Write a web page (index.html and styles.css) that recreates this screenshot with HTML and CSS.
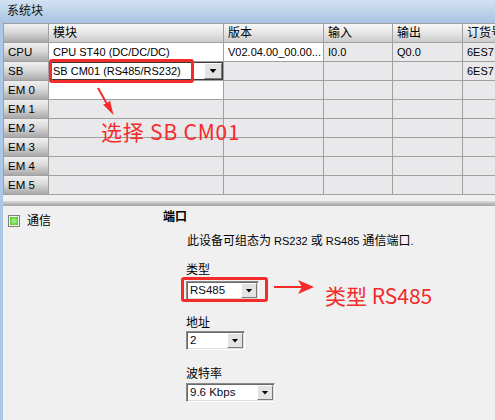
FILE: index.html
```html
<!DOCTYPE html>
<html>
<head>
<meta charset="utf-8">
<link rel="stylesheet" href="styles.css">
</head>
<body>
<div class="window">
  <div class="titlebar">系统块</div>
  <div class="main">
    <div class="grid-wrap">
      <div class="grid">
        <div class="c rh"></div>
        <div class="c h">模块</div>
        <div class="c h">版本</div>
        <div class="c h">输入</div>
        <div class="c h">输出</div>
        <div class="c h">订货号</div>

        <div class="c rh">CPU</div>
        <div class="c w">CPU ST40 (DC/DC/DC)</div>
        <div class="c w">V02.04.00_00.00...</div>
        <div class="c">I0.0</div>
        <div class="c">Q0.0</div>
        <div class="c">6ES7</div>

        <div class="c rh">SB</div>
        <div class="c combo"><span class="combo-text">SB CM01 (RS485/RS232)</span><span class="btn grid-btn"><span class="tri"></span></span></div>
        <div class="c"></div>
        <div class="c"></div>
        <div class="c"></div>
        <div class="c">6ES7</div>

        <div class="c rh">EM 0</div>
        <div class="c w"></div>
        <div class="c"></div>
        <div class="c"></div>
        <div class="c"></div>
        <div class="c"></div>

        <div class="c rh">EM 1</div>
        <div class="c"></div>
        <div class="c"></div>
        <div class="c"></div>
        <div class="c"></div>
        <div class="c"></div>

        <div class="c rh">EM 2</div>
        <div class="c"></div>
        <div class="c"></div>
        <div class="c"></div>
        <div class="c"></div>
        <div class="c"></div>

        <div class="c rh">EM 3</div>
        <div class="c"></div>
        <div class="c"></div>
        <div class="c"></div>
        <div class="c"></div>
        <div class="c"></div>

        <div class="c rh">EM 4</div>
        <div class="c"></div>
        <div class="c"></div>
        <div class="c"></div>
        <div class="c"></div>
        <div class="c"></div>

        <div class="c rh">EM 5</div>
        <div class="c"></div>
        <div class="c"></div>
        <div class="c"></div>
        <div class="c"></div>
        <div class="c"></div>
      </div>
    </div>
    <div class="gap"></div>
    <div class="splitter"></div>
    <div class="panel">
      <div class="nav">
        <div class="nav-item"><span class="chk"><span class="chk-in"></span></span><span>通信</span></div>
      </div>
      <div class="content">
        <div class="sec-title">端口</div>
        <div class="desc">此设备可组态为<span class="lat"> RS232 </span>或<span class="lat"> RS485 </span>通信端口<span class="lat">.</span></div>
        <div class="lbl lbl1">类型</div>
        <div class="sel sel-type sel1"><span class="sel-text">RS485</span><span class="btn"><span class="tri"></span></span></div>
        <div class="lbl lbl2">地址</div>
        <div class="sel sel-addr sel2"><span class="sel-text">2</span><span class="btn"><span class="tri"></span></span></div>
        <div class="lbl lbl3">波特率</div>
        <div class="sel sel-baud sel3"><span class="sel-text">9.6 Kbps</span><span class="btn"><span class="tri"></span></span></div>
      </div>
    </div>
  </div>

  <div class="redbox box1"></div>
  <div class="redbox box2"></div>
  <svg class="arrow arrow1" width="495" height="420" viewBox="0 0 495 420">
    <line x1="98" y1="88" x2="107" y2="104" stroke="#f52a2a" stroke-width="2"/>
    <polygon points="113.5,115 103,104.5 107,103.5 110,100.5" fill="#f52a2a"/>
    <line x1="274" y1="287" x2="302" y2="287" stroke="#f52a2a" stroke-width="2"/>
    <polygon points="314,287 298,280 302,287 298,294" fill="#f52a2a"/>
  </svg>
  <div class="note note1">选择 SB CM01</div>
  <div class="note note2">类型 RS485</div>
</div>
</body>
</html>
```

FILE: styles.css
```css
* { box-sizing: border-box; }

body {
  margin: 0;
  font: 12px "Liberation Sans", "Noto Sans CJK SC", sans-serif;
  color: #000;
  background: #f0f0f0;
}

.window {
  position: relative;
  width: 495px;
  height: 420px;
  overflow: hidden;
  background: #f0f0f0;
}

.titlebar {
  height: 23px;
  line-height: 23px;
  padding-left: 7px;
  background: linear-gradient(#d3e2f2, #a7c3e3);
  color: #111;
}

.main {
  border-left: 3px solid #abc8e8;
  height: 397px;
}

.grid-wrap {
  overflow: hidden;
}

.grid {
  display: grid;
  grid-template-columns: 44px 174px 99px 68px 69px 80px;
  grid-auto-rows: 18px;
  gap: 1px;
  padding: 1px;
  background: #a0a0a0;
  width: max-content;
}

.c {
  background: #e9e9eb;
  padding-left: 4px;
  line-height: 18px;
  font-size: 11px;
  white-space: nowrap;
  overflow: hidden;
}

.c.w { background: #fff; }

.c.h {
  font-size: 12px;
  background: linear-gradient(#f7f7f7, #e6e6e6 50%, #cbcbcb);
}

.c.rh {
  font-size: 11.5px;
  background: linear-gradient(#f0f0f0, #d9d9d9 45%, #a9a9a9);
}

.c.combo {
  padding: 0;
  background: #fff;
  border: 1px solid #3a3a3a;
  display: flex;
  line-height: 16px;
}

.combo-text {
  flex: 1;
  padding-left: 3px;
}

.btn {
  width: 16px;
  background: #e3e3e3;
  border: 1px solid;
  border-color: #fdfdfd #7a7a7a #7a7a7a #fdfdfd;
  display: flex;
  align-items: center;
  justify-content: center;
}

.grid-btn { width: 18px; }

.tri {
  width: 7px;
  height: 4px;
  background: #000;
  clip-path: polygon(0 0, 100% 0, 50% 100%);
}

.gap { height: 6px; }

.splitter {
  height: 5px;
  background: linear-gradient(#dcdcdc, #bdbdbd 50%, #a4a4a4);
}

.panel {
  display: flex;
}

.nav {
  width: 155px;
  padding: 9px 0 0 5px;
}

.nav-item {
  display: flex;
  align-items: center;
  gap: 7px;
  line-height: 12px;
}

.chk {
  width: 12px;
  height: 12px;
  border: 1px solid #7f7f7f;
  background: #f4f4f4;
  padding: 1px;
}

.chk-in {
  display: block;
  width: 8px;
  height: 8px;
  background: radial-gradient(circle, #b4f59a 0%, #6fdd4a 55%, #3fbf22 100%);
}

.content {
  padding: 4px 0 0 5px;
}

.sec-title {
  font-weight: bold;
  line-height: 14px;
}

.desc {
  margin-top: 10px;
  margin-left: 24px;
  line-height: 14px;
}

.lat {
  font-size: 11px;
}

.lbl {
  margin-left: 23px;
  line-height: 14px;
}

.lbl1 { margin-top: 15px; }
.lbl2 { margin-top: 16px; }
.lbl3 { margin-top: 17px; }

.sel {
  margin-left: 23px;
  height: 19px;
  display: flex;
  background: #fff;
  border: 1px solid;
  border-color: #8a8a8a #ffffff #ffffff #8a8a8a;
  box-shadow: inset 1px 1px 0 #6a6a6a, inset -1px -1px 0 #dcdcdc;
  padding: 1px;
}

.sel-text {
  flex: 1;
  padding-left: 2px;
  line-height: 15px;
  font-size: 11.5px;
  color: #0a0a20;
}

.sel1 { width: 73px; margin-top: 4px; }
.sel2 { width: 59px; margin-top: 1px; }
.sel3 { width: 89px; margin-top: 2px; }

.redbox {
  position: absolute;
  border: 3px solid #f52a2a;
  border-radius: 3px;
}

.box1 { left: 49px; top: 59px; width: 145px; height: 24px; }
.box2 { left: 181px; top: 277px; width: 87px; height: 25px; }

.arrow {
  position: absolute;
  left: 0;
  top: 0;
}

.note {
  position: absolute;
  font: 21px "Noto Sans CJK SC", "Liberation Sans", sans-serif;
  line-height: 24px;
  color: #f52a2a;
  white-space: nowrap;
}

.note1 { left: 101px; top: 119px; letter-spacing: 0.8px; }
.note2 { left: 325px; top: 283px; }
```
